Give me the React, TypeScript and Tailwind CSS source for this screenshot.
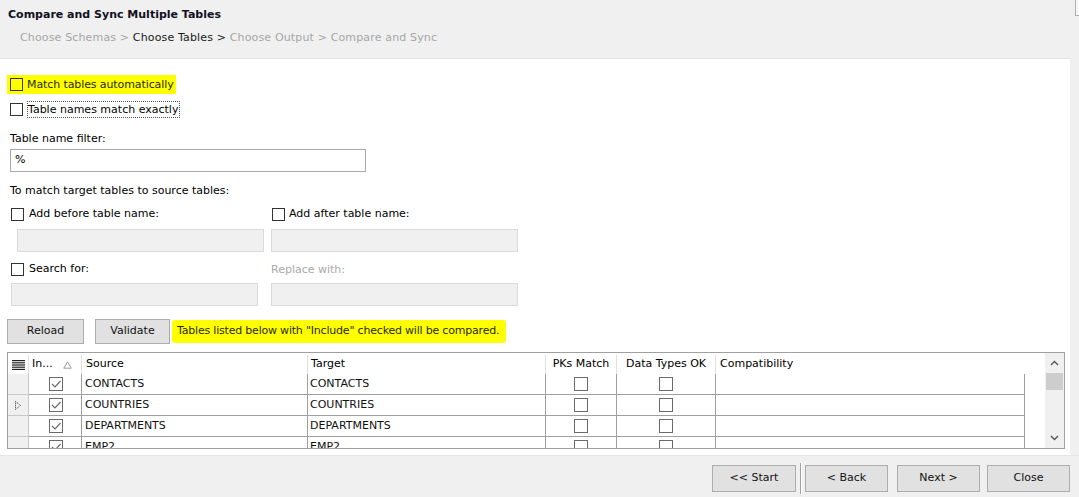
import React from "react";

function Box({ checked = false, className = "" }: { checked?: boolean; className?: string }) {
  return (
    <span className={"inline-flex w-[13px] h-[13px] shrink-0 border border-[#333333] items-center justify-center " + className}>
      {checked ? (
        <svg width="11" height="11" viewBox="0 0 11 11">
          <path d="M1.5 5.5 L4.2 8.2 L9.5 2.5" fill="none" stroke="#555555" strokeWidth="1.3" />
        </svg>
      ) : null}
    </span>
  );
}

function GridBox({ checked = false }: { checked?: boolean }) {
  return (
    <span className="inline-flex w-[14px] h-[14px] border border-[#6a6a6a] bg-white items-center justify-center">
      {checked ? (
        <svg width="12" height="12" viewBox="0 0 12 12">
          <path d="M2 6 L5 9 L10.5 3" fill="none" stroke="#6a6a6a" strokeWidth="1.2" />
        </svg>
      ) : null}
    </span>
  );
}

function Btn({ label, className = "" }: { label: string; className?: string }) {
  return (
    <div className={"flex items-center justify-center bg-[#e1e1e1] border border-[#adadad] text-[#111] whitespace-nowrap " + className}>
      {label}
    </div>
  );
}

const rows = ["CONTACTS", "COUNTRIES", "DEPARTMENTS", "EMP2"];

export default function App() {
  return (
    <div className="w-[1079px] h-[497px] bg-[#f0f0f0] flex flex-col overflow-hidden font-['DejaVu_Sans','Liberation_Sans',sans-serif] text-[11px] text-black whitespace-nowrap">
      {/* header */}
      <div className="h-[58px] shrink-0 flex justify-between">
        <div className="pl-[8px] pt-[8px]">
          <div className="h-[14px] leading-[14px] font-bold text-[#111122]">Compare and Sync Multiple Tables</div>
          <div className="mt-[9px] pl-[12px] h-[14px] leading-[14px] text-[#a6a6a6] tracking-[0.15px]">
            Choose Schemas &gt; <span className="text-[#1a1a1a]">Choose Tables &gt;</span> Choose Output &gt; Compare and Sync
          </div>
        </div>
        <div className="w-[4px] h-[16px] border-l border-b border-[#b0b0b0] bg-[#f7f7f7]" />
      </div>

      {/* main */}
      <div className="h-[397px] shrink-0 flex">
        <div className="w-[1070px] h-full bg-white border-t border-[#e4e4e4] flex flex-col">
          {/* row 1 highlighted */}
          <div className="mt-[16px] ml-[7px] self-start h-[19px] bg-[#ffff00] flex items-center pl-[3px] pr-[2px]">
            <Box className="border-[#4a4a00]" />
            <span className="ml-[4px] mt-[1px] text-[#2a2a00] tracking-[-0.1px]">Match tables automatically</span>
          </div>
          {/* row 2 */}
          <div className="mt-[7px] ml-[10px] h-[17px] flex items-center">
            <Box className="bg-white" />
            <span className="ml-[4px] h-[17px] leading-[15px] border border-dotted border-[#555] pr-[1px]">Table names match exactly</span>
          </div>
          <div className="mt-[13px] ml-[10px] h-[16px] leading-[16px]">Table name filter:</div>
          <div className="mt-[2px] ml-[10px] w-[356px] h-[23px] border border-[#a9a9a9] flex items-center pl-[4px]">%</div>
          <div className="mt-[11px] ml-[10px] h-[16px] leading-[16px]">To match target tables to source tables:</div>
          <div className="mt-[7px] ml-[11px] h-[16px] flex items-center">
            <div className="w-[261px] flex items-center">
              <Box />
              <span className="ml-[5px]">Add before table name:</span>
            </div>
            <div className="flex items-center">
              <Box />
              <span className="ml-[4px]">Add after table name:</span>
            </div>
          </div>
          <div className="mt-[7px] ml-[17px] h-[23px] flex gap-[7px]">
            <div className="w-[247px] h-[23px] bg-[#f0f0f0] border border-[#dadada]" />
            <div className="w-[247px] h-[23px] bg-[#f0f0f0] border border-[#dadada]" />
          </div>
          <div className="mt-[9px] ml-[11px] h-[16px] flex items-center">
            <div className="w-[260px] flex items-center">
              <Box />
              <span className="ml-[5px]">Search for:</span>
            </div>
            <span className="mt-[2px] text-[#a8a8a8]">Replace with:</span>
          </div>
          <div className="mt-[6px] ml-[11px] h-[23px] flex gap-[13px]">
            <div className="w-[247px] h-[23px] bg-[#f0f0f0] border border-[#dadada]" />
            <div className="w-[247px] h-[23px] bg-[#f0f0f0] border border-[#dadada]" />
          </div>
          {/* buttons */}
          <div className="mt-[13px] ml-[7px] h-[25px] flex items-center">
            <Btn label="Reload" className="w-[77px] h-[25px]" />
            <Btn label="Validate" className="ml-[11px] w-[75px] h-[25px]" />
            <div className="ml-[2px] h-[23px] bg-[#ffff00] rounded-[3px] flex items-center pl-[5px] pr-[7px] text-[#2a2a00] tracking-[-0.2px]">
              Tables listed below with "Include" checked will be compared.
            </div>
          </div>
          {/* table */}
          <div className="mt-[8px] ml-[7px] w-[1058px] h-[97px] border border-[#a0a0a0] flex overflow-hidden">
            <div className="flex-1 flex flex-col">
              {/* header */}
              <div className="h-[21px] shrink-0 flex bg-white pt-[2px]">
                <div className="w-[21px] flex items-center justify-center border-r border-[#e0e0e0]">
                  <svg width="13" height="10" viewBox="0 0 13 10">
                    <rect x="0" y="0" width="13" height="1.2" fill="#222" />
                    <rect x="0" y="2.2" width="13" height="1.2" fill="#222" />
                    <rect x="0" y="4.4" width="13" height="1.2" fill="#222" />
                    <rect x="0" y="6.6" width="13" height="1.2" fill="#222" />
                    <rect x="0" y="8.8" width="13" height="1.2" fill="#222" />
                  </svg>
                </div>
                <div className="w-[53px] flex items-center pl-[3px] border-r border-[#e0e0e0]">
                  <span>In...</span>
                  <svg className="ml-[10px]" width="9" height="8" viewBox="0 0 9 8">
                    <path d="M4.5 0.8 L8.2 7.2 L0.8 7.2 Z" fill="none" stroke="#9a9a9a" strokeWidth="1" />
                  </svg>
                </div>
                <div className="w-[226px] flex items-center pl-[4px] border-r border-[#e0e0e0]">Source</div>
                <div className="w-[238px] flex items-center pl-[3px] border-r border-[#e0e0e0]">Target</div>
                <div className="w-[71px] flex items-center justify-center border-r border-[#e0e0e0]">PKs Match</div>
                <div className="w-[99px] flex items-center justify-center border-r border-[#e0e0e0]">Data Types OK</div>
                <div className="w-[309px] flex items-center pl-[4px]">Compatibility</div>
                <div className="flex-1" />
              </div>
              {rows.map((name, i) => (
                <div key={name} className="h-[21px] shrink-0 flex">
                  <div className="w-[21px] bg-[#f0f0f0] border-r border-b border-[#c8c8c8] flex items-center pl-[7px]">
                    {i === 1 ? (
                      <svg width="6" height="9" viewBox="0 0 6 9">
                        <path d="M0.5 0.5 L5.5 4.5 L0.5 8.5 Z" fill="none" stroke="#333" strokeWidth="1" strokeDasharray="1 1" />
                      </svg>
                    ) : null}
                  </div>
                  <div className="w-[53px] border-r border-b border-[#a0a0a0] flex items-center justify-center pl-[1px]">
                    <GridBox checked />
                  </div>
                  <div className="w-[226px] border-r border-b border-[#a0a0a0] flex items-center pl-[3px] text-[#111]">{name}</div>
                  <div className="w-[238px] border-r border-b border-[#a0a0a0] flex items-center pl-[2px] text-[#111]">{name}</div>
                  <div className="w-[71px] border-r border-b border-[#a0a0a0] flex items-center justify-center">
                    <GridBox />
                  </div>
                  <div className="w-[99px] border-r border-b border-[#a0a0a0] flex items-center justify-center">
                    <GridBox />
                  </div>
                  <div className="w-[309px] border-r border-b border-[#a0a0a0]" />
                  <div className="flex-1" />
                </div>
              ))}
            </div>
            {/* scrollbar */}
            <div className="w-[19px] shrink-0 bg-[#f0f0f0] flex flex-col items-center">
              <div className="h-[20px] flex items-center justify-center">
                <svg width="9" height="6" viewBox="0 0 9 6">
                  <path d="M1 5 L4.5 1.5 L8 5" fill="none" stroke="#555" strokeWidth="1.4" />
                </svg>
              </div>
              <div className="w-[17px] h-[17px] bg-[#cdcdcd]" />
              <div className="flex-1" />
              <div className="h-[20px] flex items-center justify-center">
                <svg width="9" height="6" viewBox="0 0 9 6">
                  <path d="M1 1 L4.5 4.5 L8 1" fill="none" stroke="#555" strokeWidth="1.4" />
                </svg>
              </div>
            </div>
          </div>
        </div>
      </div>

      {/* footer */}
      <div className="flex-1 flex justify-end items-start pt-[9px] pr-[9px] border-t border-[#e6e6e6]">
        <Btn label="<< Start" className="w-[84px] h-[27px]" />
        <div className="ml-[4px] -mt-[2px] w-[2px] h-[31px] border-l border-[#a0a0a0] border-r border-r-white" />
        <Btn label="< Back" className="ml-[3px] w-[83px] h-[27px]" />
        <Btn label="Next >" className="ml-[9px] w-[83px] h-[27px]" />
        <Btn label="Close" className="ml-[7px] w-[83px] h-[27px]" />
      </div>
    </div>
  );
}
